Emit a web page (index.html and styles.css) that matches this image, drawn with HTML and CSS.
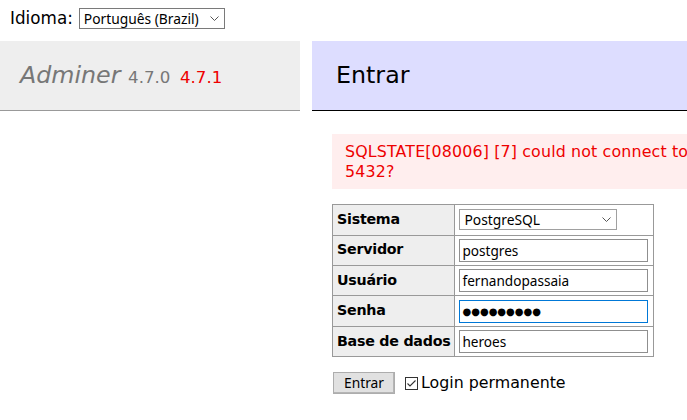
FILE: index.html
```html
<!DOCTYPE html>
<html lang="pt-br">
<head>
<meta charset="utf-8">
<title>Entrar - Adminer</title>
<link rel="stylesheet" href="styles.css">
</head>
<body>
<form class="lang-bar">
  <span class="lang-label">Idioma:</span>
  <span class="select-wrap lang-select-wrap">
    <select class="select lang-select"><option>Português (Brazil)</option></select>
    <svg class="chevron" width="9" height="5" viewBox="0 0 9 5"><path d="M0.5 0.5 L4.5 4.5 L8.5 0.5" fill="none" stroke="#555" stroke-width="1"/></svg>
  </span>
</form>
<div class="layout">
  <div class="menu">
    <h1 class="brand"><a class="brand-name">Adminer</a> <span class="version">4.7.0</span> <a class="version version-new">4.7.1</a></h1>
  </div>
  <div class="content">
    <h2 class="page-title">Entrar</h2>
    <div class="error"><span class="error-line">SQLSTATE[08006] [7] could not connect to server: Connection refused Is the server running on host "postgres" and accepting TCP/IP connections on port</span><br>5432?</div>
    <form class="login-form">
      <table class="login-table">
        <tr><th>Sistema</th><td>
          <span class="select-wrap system-select-wrap">
            <select class="select system-select"><option>PostgreSQL</option></select>
            <svg class="chevron" width="9" height="5" viewBox="0 0 9 5"><path d="M0.5 0.5 L4.5 4.5 L8.5 0.5" fill="none" stroke="#555" stroke-width="1"/></svg>
          </span>
        </td></tr>
        <tr><th>Servidor</th><td><input class="field" type="text" value="postgres"></td></tr>
        <tr><th>Usuário</th><td><input class="field" type="text" value="fernandopassaia"></td></tr>
        <tr><th>Senha</th><td><input class="field field-focus" type="text" value="●●●●●●●●●"></td></tr>
        <tr><th>Base de dados</th><td><input class="field" type="text" value="heroes"></td></tr>
      </table>
      <p class="actions">
        <button type="button" class="btn">Entrar</button>
        <label class="check-label"><svg class="check-box" width="13" height="13" viewBox="0 0 13 13"><rect x="0.5" y="0.5" width="12" height="12" fill="#fff" stroke="#333"/><path d="M2.5 6.5 L5 9 L10.5 3.5" fill="none" stroke="#333" stroke-width="1.1"/></svg>Login permanente</label>
      </p>
    </form>
  </div>
</div>
</body>
</html>
```
FILE: styles.css
```css
html, body {
  overflow: hidden;
}
body {
  margin: 0;
  color: #000;
  background: #fff;
  font-family: "DejaVu Sans", Verdana, sans-serif;
  font-size: 15.84px;
  line-height: 1.25;
}
.lang-bar {
  height: 41px;
  display: flex;
  align-items: flex-start;
  padding: 0 0 0 10px;
  box-sizing: border-box;
}
.lang-label {
  font-size: 16.8px;
  margin-top: 8px;
  margin-right: 6px;
}
.select-wrap {
  position: relative;
  display: inline-block;
}
.select {
  appearance: none;
  -webkit-appearance: none;
  background: #fff;
  border: 1px solid #7a7a7a;
  border-radius: 0;
  font-family: "Noto Sans", "Open Sans", sans-serif;
  font-size: 13.8px;
  color: #000;
  padding: 0 0 0 4px;
  margin: 0;
  box-sizing: border-box;
  outline: none;
}
.chevron {
  position: absolute;
  top: 8px;
  right: 6px;
  pointer-events: none;
}
.lang-select-wrap {
  margin-top: 8px;
}
.lang-select {
  width: 146px;
  height: 21px;
  line-height: 19px;
}
.layout {
  display: flex;
  align-items: flex-start;
}
.menu {
  flex: none;
  width: 300px;
}
.brand {
  margin: 0;
  font-size: 23.76px;
  font-weight: normal;
  line-height: 1.25;
  padding: 19.5px 20px;
  background: #eee;
  border-bottom: 1px solid #999;
  color: #777;
  white-space: nowrap;
}
.brand-name {
  font-style: italic;
  color: #777;
}
.version {
  font-size: 70%;
  color: #777;
}
.version-new {
  color: #e00;
  margin-left: 2px;
}
.content {
  flex: none;
  width: 700px;
  margin-left: 12px;
}
.page-title {
  margin: 0 0 23px;
  font-size: 23.76px;
  font-weight: normal;
  line-height: 1.25;
  padding: 19.5px 24px;
  background: #ddf;
  border-bottom: 1px solid #000;
}
.error {
  margin: 0 0 0 20px;
  padding: 8px 13px;
  background: #fee;
  color: #e00;
  white-space: nowrap;
  line-height: 19.8px;
  letter-spacing: 0.15px;
}
.login-form {
  margin: 0 0 0 20px;
}
.login-table {
  margin-top: 15px;
  border-collapse: separate;
  border-spacing: 0;
  border-top: 1px solid #999;
  border-left: 1px solid #999;
  font-size: 14.26px;
}
.login-table th,
.login-table td {
  border-right: 1px solid #999;
  border-bottom: 1px solid #999;
  padding: 3.2px 4px;
  height: 23px;
}
.login-table th {
  background: #eee;
  text-align: left;
  font-weight: bold;
  letter-spacing: -0.25px;
}
.login-table td {
  padding-right: 5px;
}
.system-select-wrap {
  display: block;
  width: 158px;
  padding: 1px 0;
}
.system-select {
  display: block;
  width: 158px;
  height: 21px;
  border-color: #a0a0a0;
}
.system-select-wrap .chevron {
  top: 9px;
  right: 6px;
}
.field {
  display: block;
  box-sizing: border-box;
  width: 189px;
  height: 23px;
  border: 1px solid #8f8f8f;
  padding: 0 2px;
  margin: 0;
  font-family: "Noto Sans", "Open Sans", sans-serif;
  font-size: 13.6px;
  color: #000;
  outline: none;
}
.field-focus {
  border-color: #0078d7;
  font-family: "DejaVu Sans", sans-serif;
  font-size: 10px;
  letter-spacing: 0;
}
.actions {
  margin: 15px 0 0 1px;
  display: flex;
  align-items: center;
}
.btn {
  width: 62px;
  height: 22px;
  padding: 0;
  background: #e1e1e1;
  border: 1px solid #adadad;
  box-shadow: inset -1px -1px 0 #b5b5b5;
  font-family: "Noto Sans", "Open Sans", sans-serif;
  font-size: 13.8px;
  color: #000;
  line-height: 20px;
}
.check-label {
  display: flex;
  align-items: center;
  margin-left: 10px;
}
.check-box {
  margin-right: 3px;
}
```
